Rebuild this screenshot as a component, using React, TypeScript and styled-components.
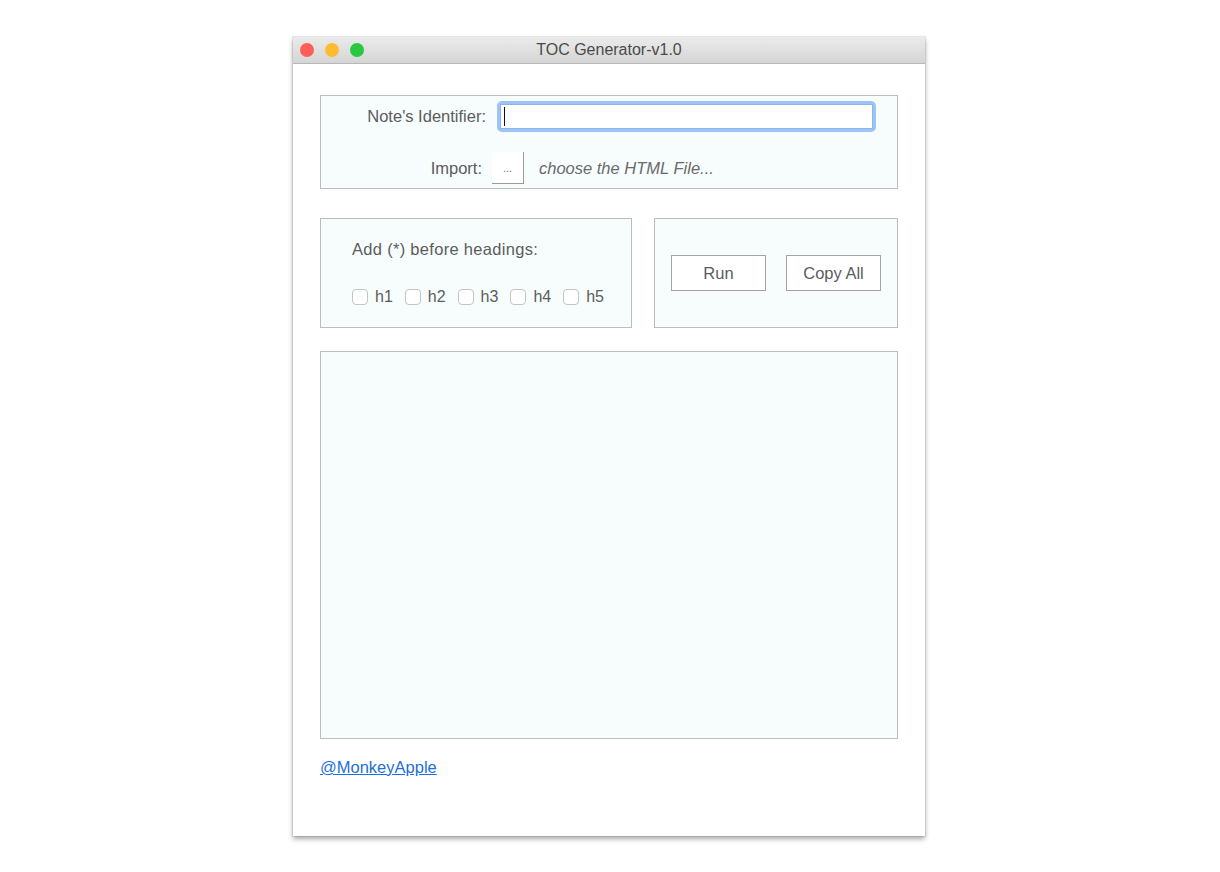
import React from "react";
import styled, { createGlobalStyle } from "styled-components";

const GlobalStyle = createGlobalStyle`
  html, body {
    margin: 0;
    padding: 0;
    background: #ffffff;
  }
  body {
    font-family: "Liberation Sans", Arial, sans-serif;
  }
`;

const Page = styled.div`
  width: 1220px;
  height: 872px;
  display: flex;
  justify-content: center;
  padding: 37px 2px 0 0;
  box-sizing: border-box;
`;

const Window = styled.div`
  width: 632px;
  height: 799px;
  background: #ffffff;
  display: flex;
  flex-direction: column;
  box-shadow: 0 0 0 1px rgba(0, 0, 0, 0.08), 0 3px 5px rgba(0, 0, 0, 0.35);
`;

const TitleBar = styled.div`
  height: 27px;
  flex-shrink: 0;
  position: relative;
  display: flex;
  align-items: center;
  justify-content: center;
  background: linear-gradient(#ebebeb, #d5d5d5);
  border-bottom: 1px solid #b7b7b7;
  box-sizing: border-box;
  font-size: 16px;
  color: #4b4b4b;
`;

const Lights = styled.div`
  position: absolute;
  left: 7px;
  top: 6px;
  display: flex;
  gap: 11px;
`;

const Light = styled.span<{ $c: string }>`
  width: 14px;
  height: 14px;
  border-radius: 50%;
  background: ${(p) => p.$c};
`;

const Content = styled.div`
  padding: 31px 27px 0 27px;
  display: flex;
  flex-direction: column;
`;

const Panel = styled.div<{ $w?: number; $h: number }>`
  background: #f7fdfd;
  border: 1px solid #b9bebf;
  box-sizing: border-box;
  height: ${(p) => p.$h}px;
  width: ${(p) => (p.$w ? `${p.$w}px` : "100%")};
`;

const IdPanel = styled(Panel)`
  padding: 5px 21px 0 0;
  display: flex;
  flex-direction: column;
  gap: 20px;
`;

const Row = styled.div`
  display: flex;
  align-items: center;
`;

const Label = styled.span<{ $w: number; $gap: number }>`
  width: ${(p) => p.$w}px;
  margin-right: ${(p) => p.$gap}px;
  text-align: right;
  font-size: 16.5px;
  color: #5c5c5c;
  flex-shrink: 0;
`;

const FocusRing = styled.div`
  flex: 1;
  height: 31px;
  border-radius: 5px;
  background: #9dc4f6;
  padding: 3px;
  box-sizing: border-box;
`;

const TextInput = styled.div`
  height: 100%;
  background: #ffffff;
  border: 1px solid #8fb5e8;
  box-sizing: border-box;
  display: flex;
  align-items: center;
  padding-left: 3px;
`;

const Caret = styled.span`
  width: 1px;
  height: 19px;
  background: #111;
`;

const DotsButton = styled.div`
  width: 32px;
  height: 32px;
  box-sizing: border-box;
  border-right: 1px solid #9a9a9a;
  border-bottom: 1px solid #9a9a9a;
  background: #ffffff;
  display: flex;
  align-items: center;
  justify-content: center;
  font-size: 11px;
  color: #707070;
  margin-right: 15px;
`;

const Hint = styled.span`
  font-style: italic;
  font-size: 16.5px;
  color: #6a6a6a;
`;

const MidRow = styled.div`
  display: flex;
  gap: 22px;
  margin-top: 29px;
`;

const OptionsPanel = styled(Panel)`
  padding: 20px 0 0 31px;
  display: flex;
  flex-direction: column;
  gap: 29px;
`;

const Heading = styled.span`
  font-size: 16.5px;
  color: #5c5c5c;
  line-height: 20px;
  letter-spacing: 0.3px;
`;

const Checks = styled.div`
  display: flex;
  align-items: center;
  gap: 12px;
`;

const CheckItem = styled.label`
  display: flex;
  align-items: center;
  gap: 7px;
  font-size: 16px;
  color: #5c5c5c;
`;

const Box = styled.span`
  width: 16px;
  height: 16px;
  border: 1px solid #c4c4c4;
  border-radius: 4px;
  background: #ffffff;
  box-sizing: border-box;
`;

const ActionPanel = styled(Panel)`
  display: flex;
  align-items: center;
  justify-content: center;
  gap: 20px;
`;

const Button = styled.div`
  width: 95px;
  height: 36px;
  box-sizing: border-box;
  border: 1px solid #a3a3a3;
  background: #ffffff;
  display: flex;
  align-items: center;
  justify-content: center;
  font-size: 16.5px;
  color: #5c5c5c;
`;

const OutputPanel = styled(Panel)`
  margin-top: 23px;
`;

const Link = styled.a`
  margin-top: 19px;
  font-size: 16.5px;
  color: #1d6fe0;
  text-decoration: underline;
  align-self: flex-start;
`;

export default function App() {
  const heads = ["h1", "h2", "h3", "h4", "h5"];
  return (
    <>
      <GlobalStyle />
      <Page>
        <Window>
          <TitleBar>
            <Lights>
              <Light $c="#fe5f57" />
              <Light $c="#febc2e" />
              <Light $c="#28c840" />
            </Lights>
            TOC Generator-v1.0
          </TitleBar>
          <Content>
            <IdPanel $h={94}>
              <Row>
                <Label $w={165} $gap={11}>Note's Identifier:</Label>
                <FocusRing>
                  <TextInput>
                    <Caret />
                  </TextInput>
                </FocusRing>
              </Row>
              <Row>
                <Label $w={161} $gap={10}>Import:</Label>
                <DotsButton>...</DotsButton>
                <Hint>choose the HTML File...</Hint>
              </Row>
            </IdPanel>
            <MidRow>
              <OptionsPanel $w={312} $h={110}>
                <Heading>Add (*) before headings:</Heading>
                <Checks>
                  {heads.map((h) => (
                    <CheckItem key={h}>
                      <Box />
                      {h}
                    </CheckItem>
                  ))}
                </Checks>
              </OptionsPanel>
              <ActionPanel $w={244} $h={110}>
                <Button>Run</Button>
                <Button>Copy All</Button>
              </ActionPanel>
            </MidRow>
            <OutputPanel $h={388} />
            <Link href="#">@MonkeyApple</Link>
          </Content>
        </Window>
      </Page>
    </>
  );
}
